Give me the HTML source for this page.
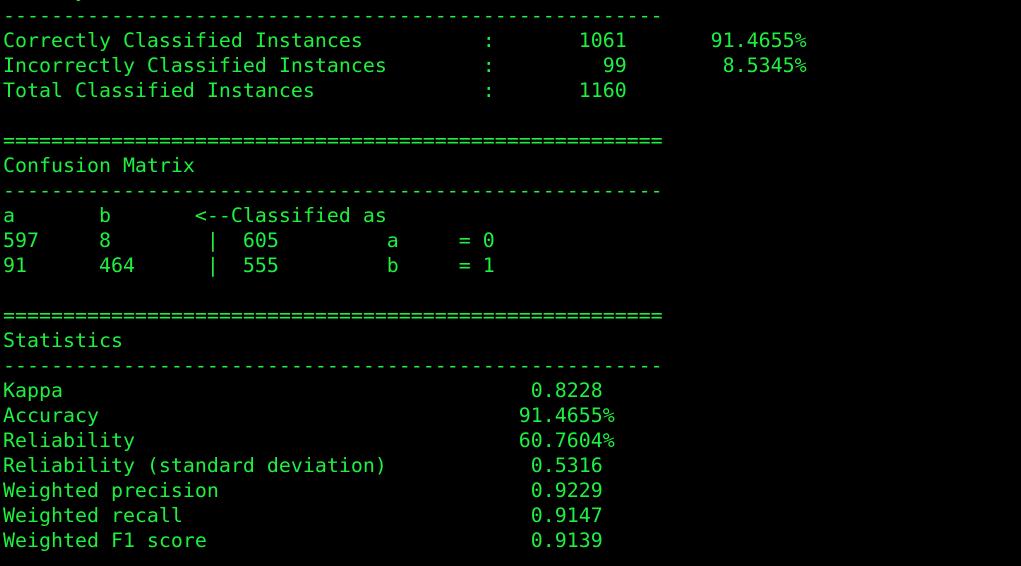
<!DOCTYPE html>
<html><head><style>
html,body{margin:0;padding:0;background:#000;width:1021px;height:566px;overflow:hidden}
pre{position:absolute;left:3px;top:-22.5px;margin:0;font-family:"DejaVu Sans Mono","Liberation Mono",monospace;font-size:19.93px;line-height:25px;color:#1ef040}
</style></head><body><pre>Summary
-------------------------------------------------------
Correctly Classified Instances          :       1061       91.4655%
Incorrectly Classified Instances        :         99        8.5345%
Total Classified Instances              :       1160

=======================================================
Confusion Matrix
-------------------------------------------------------
a       b       &lt;--Classified as
597     8        |  605         a     = 0
91      464      |  555         b     = 1

=======================================================
Statistics
-------------------------------------------------------
Kappa                                       0.8228
Accuracy                                   91.4655%
Reliability                                60.7604%
Reliability (standard deviation)            0.5316
Weighted precision                          0.9229
Weighted recall                             0.9147
Weighted F1 score                           0.9139
</pre></body></html>
